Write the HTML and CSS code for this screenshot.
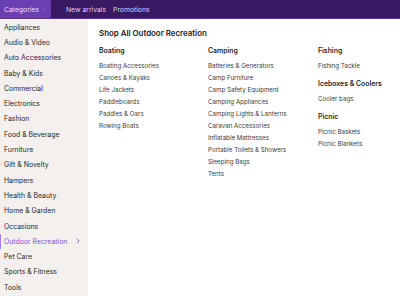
FILE: index.html
```html
<!DOCTYPE html>
<html lang="en">

<head>
  <meta charset="UTF-8">
  <meta name="viewport" content="width=device-width, initial-scale=1.0">
  <title>mega_menu</title>
  <link rel="stylesheet" href="styles.css">
</head>

<body>
  <!-- 顶部导航 -->
  <header class="topbar">
    <button class="cat-btn">Categories
      <svg width="6" height="4" viewBox="0 0 6 4"><path d="M0.8 3.3 L3 1 L5.2 3.3" fill="none" stroke="#fff" stroke-width="1.1"/></svg>
    </button>
    <nav class="top-links">
      <a>New arrivals</a>
      <a>Promotions</a>
    </nav>
  </header>

  <div class="menu">
    <!-- 左侧分类 -->
    <ul class="side">
      <li>Appliances</li>
      <li>Audio &amp; Video</li>
      <li>Auto Accessories</li>
      <li>Baby &amp; Kids</li>
      <li>Commercial</li>
      <li>Electronics</li>
      <li>Fashion</li>
      <li>Food &amp; Beverage</li>
      <li>Furniture</li>
      <li>Gift &amp; Novelty</li>
      <li>Hampers</li>
      <li>Health &amp; Beauty</li>
      <li>Home &amp; Garden</li>
      <li>Occasions</li>
      <li class="active">Outdoor Recreation
        <svg width="4" height="6" viewBox="0 0 4 6"><path d="M1 0.8 L3 3 L1 5.2" fill="none" stroke="#8a52d6" stroke-width="0.9"/></svg>
      </li>
      <li>Pet Care</li>
      <li>Sports &amp; Fitness</li>
      <li>Tools</li>
    </ul>

    <!-- 子分类面板 -->
    <section class="panel">
      <h2 class="shop-all">Shop All Outdoor Recreation</h2>
      <div class="cols">
        <div class="col">
          <h3>Boating</h3>
          <ul>
            <li>Boating Accessories</li>
            <li>Canoes &amp; Kayaks</li>
            <li>Life Jackets</li>
            <li>Paddleboards</li>
            <li>Paddles &amp; Oars</li>
            <li>Rowing Boats</li>
          </ul>
        </div>
        <div class="col">
          <h3>Camping</h3>
          <ul>
            <li>Batteries &amp; Generators</li>
            <li>Camp Furniture</li>
            <li>Camp Safety Equipment</li>
            <li>Camping Appliances</li>
            <li>Camping Lights &amp; Lanterns</li>
            <li>Caravan Accessories</li>
            <li>Inflatable Mattresses</li>
            <li>Portable Toilets &amp; Showers</li>
            <li>Sleeping Bags</li>
            <li>Tents</li>
          </ul>
        </div>
        <div class="col last">
          <h3>Fishing</h3>
          <ul>
            <li>Fishing Tackle</li>
          </ul>
          <h3>Iceboxes &amp; Coolers</h3>
          <ul>
            <li>Cooler bags</li>
          </ul>
          <h3>Picnic</h3>
          <ul>
            <li>Picnic Baskets</li>
            <li>Picnic Blankets</li>
          </ul>
        </div>
      </div>
    </section>
  </div>
</body>

</html>
```

FILE: styles.css
```css
body,
html {
  margin: 0;
  width: 100%;
  height: 100%;
  overflow: hidden;
}

body {
  font-family: Inter, "Noto Sans", sans-serif;
  color: #222;
  background: #fff;
}

ul {
  list-style: none;
  margin: 0;
  padding: 0;
}

.topbar {
  display: flex;
  align-items: stretch;
  height: 18px;
  background: #391961;
  border-bottom: 1px solid #5a3590;
}

.cat-btn {
  display: flex;
  align-items: center;
  gap: 5px;
  border: 0;
  margin: 0;
  padding: 0 5px 0 4px;
  height: 18px;
  width: 51px;
  background: #6a3fb2;
  border-radius: 0 2px 2px 0;
  color: #e9defa;
  font-family: inherit;
  font-size: 6.8px;
}

.top-links {
  display: flex;
  gap: 7px;
  margin-left: 15px;
  align-items: center;
}

.top-links a {
  color: #ddd2ef;
  font-size: 6.8px;
}

.menu {
  display: flex;
  height: 277px;
}

.side {
  width: 88px;
  flex-shrink: 0;
  background: #f3f0ed;
  padding-top: 0.5px;
}

.side li {
  display: flex;
  align-items: center;
  justify-content: space-between;
  height: 15.3px;
  padding: 0 8px 0 4px;
  font-size: 6.9px;
  color: #2a2a2a;
}

.side li.active {
  color: #8a52d6;
  box-shadow: inset 1px 0 0 #a77ce4;
}

.panel {
  flex: 1;
  min-width: 0;
  padding: 9px 0 0 11px;
}

.shop-all {
  margin: 0 0 7px;
  font-size: 7.9px;
  font-weight: 600;
  color: #1d1d1d;
}

.cols {
  display: flex;
}

.col {
  width: 109px;
  flex-shrink: 0;
}

.col.last {
  flex: 1;
  width: auto;
  padding-left: 1px;
}

.col h3 {
  margin: 0 0 3px;
  height: 12px;
  line-height: 12px;
  font-size: 6.9px;
  font-weight: 600;
  color: #1f1f1f;
}

.col ul {
  margin-bottom: 6px;
}

.col li {
  height: 12px;
  line-height: 12px;
  font-size: 6.2px;
  color: #3a3a3a;
}
```
